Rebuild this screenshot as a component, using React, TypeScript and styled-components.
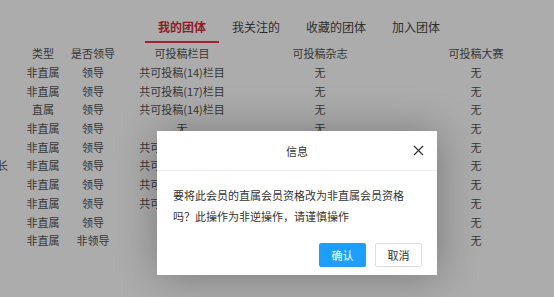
import React from 'react'
import styled, { createGlobalStyle } from 'styled-components'

const GlobalStyle = createGlobalStyle`
  html, body {
    margin: 0;
    padding: 0;
    background: #acacac;
    font-family: "Noto Sans CJK SC", "Liberation Sans", sans-serif;
  }
`

const Page = styled.div`
  position: relative;
  width: 554px;
  height: 297px;
  overflow: hidden;
  background: #acacac;
  color: #363636;
`

const Tabs = styled.ul`
  display: flex;
  margin: 0;
  padding: 17px 0 0 145px;
  list-style: none;
`

const Tab = styled.li<{ $active?: boolean }>`
  padding: 0 13px;
  height: 26px;
  line-height: 20px;
  font-size: 12px;
  color: ${({ $active }) => ($active ? '#8e1b2b' : '#2e2e2e')};
  font-weight: ${({ $active }) => ($active ? 'bold' : 'normal')};
  border-bottom: 2px solid ${({ $active }) => ($active ? '#9b2335' : 'transparent')};
  box-sizing: border-box;
`

const Table = styled.div`
  display: flex;
  flex-direction: column;
  margin-top: 1px;
`

const Row = styled.div`
  display: grid;
  grid-template-columns: 8px 70px 30px 148px 128px 184px;
  height: 18.7px;
  align-items: center;
  font-size: 11px;
  line-height: 18px;
`

const Cell = styled.div`
  display: flex;
  justify-content: center;
  white-space: nowrap;
`

const ClipCell = styled.div`
  display: flex;
  justify-content: flex-end;
  overflow: hidden;
  white-space: nowrap;
`

const Dialog = styled.div`
  position: absolute;
  left: 157px;
  top: 131px;
  width: 280px;
  height: 144px;
  background: #fff;
  box-shadow: 1px 1px 40px rgba(0, 0, 0, 0.3);
  display: flex;
  flex-direction: column;
`

const DialogHead = styled.div`
  height: 39px;
  display: flex;
  align-items: center;
  justify-content: center;
  position: relative;
  border-bottom: 1px solid #f0f0f0;
  font-size: 11px;
  color: #333;
`

const CloseBtn = styled.span`
  position: absolute;
  right: 13px;
  top: 14px;
  width: 11px;
  height: 11px;
  display: flex;
`

const DialogBody = styled.div`
  padding: 14px 16px 0 16px;
  font-size: 11px;
  line-height: 21px;
  color: #333;
  flex: 1;
`

const DialogFoot = styled.div`
  display: flex;
  justify-content: flex-end;
  gap: 9px;
  padding: 0 15px 8px 0;
`

const Btn = styled.button<{ $primary?: boolean }>`
  width: 47px;
  height: 24px;
  padding: 0;
  font-family: inherit;
  font-size: 11px;
  border: 1px solid ${({ $primary }) => ($primary ? '#1e9fff' : '#dedede')};
  background: ${({ $primary }) => ($primary ? '#1e9fff' : '#fff')};
  color: ${({ $primary }) => ($primary ? '#fff' : '#333')};
  border-radius: 2px;
`

const rows = [
  ['', '非直属', '领导', '共可投稿(14)栏目', '无', '无'],
  ['', '非直属', '领导', '共可投稿(17)栏目', '无', '无'],
  ['', '直属', '领导', '共可投稿(14)栏目', '无', '无'],
  ['', '非直属', '领导', '无', '无', '无'],
  ['', '非直属', '领导', '共可投稿(14)栏目', '无', '无'],
  ['社长', '非直属', '领导', '共可投稿(14)栏目', '无', '无'],
  ['', '非直属', '领导', '共可投稿(14)栏目', '无', '无'],
  ['', '非直属', '领导', '共可投稿(14)栏目', '无', '无'],
  ['', '非直属', '领导', '', '无', '无'],
  ['', '非直属', '非领导', '', '无', '无'],
]

const tabs = ['我的团体', '我关注的', '收藏的团体', '加入团体']

const App = () => {
  return (
    <Page>
      <GlobalStyle />
      <Tabs>
        {tabs.map((t, i) => (
          <Tab key={t} $active={i === 0}>
            {t}
          </Tab>
        ))}
      </Tabs>
      <Table>
        <Row>
          <ClipCell />
          <Cell>类型</Cell>
          <Cell>是否领导</Cell>
          <Cell>可投稿栏目</Cell>
          <Cell>可投稿杂志</Cell>
          <Cell>可投稿大赛</Cell>
        </Row>
        {rows.map((r, i) => (
          <Row key={i}>
            <ClipCell>{r[0]}</ClipCell>
            {r.slice(1).map((c, j) => (
              <Cell key={j}>{c}</Cell>
            ))}
          </Row>
        ))}
      </Table>
      <Dialog>
        <DialogHead>
          信息
          <CloseBtn>
            <svg width="11" height="11" viewBox="0 0 11 11">
              <path d="M1 1 L10 10 M10 1 L1 10" stroke="#333" strokeWidth="1.2" fill="none" />
            </svg>
          </CloseBtn>
        </DialogHead>
        <DialogBody>
          要将此会员的直属会员资格改为非直属会员资格
          <br />
          吗？此操作为非逆操作，请谨慎操作
        </DialogBody>
        <DialogFoot>
          <Btn $primary>确认</Btn>
          <Btn>取消</Btn>
        </DialogFoot>
      </Dialog>
    </Page>
  )
}

export default App
